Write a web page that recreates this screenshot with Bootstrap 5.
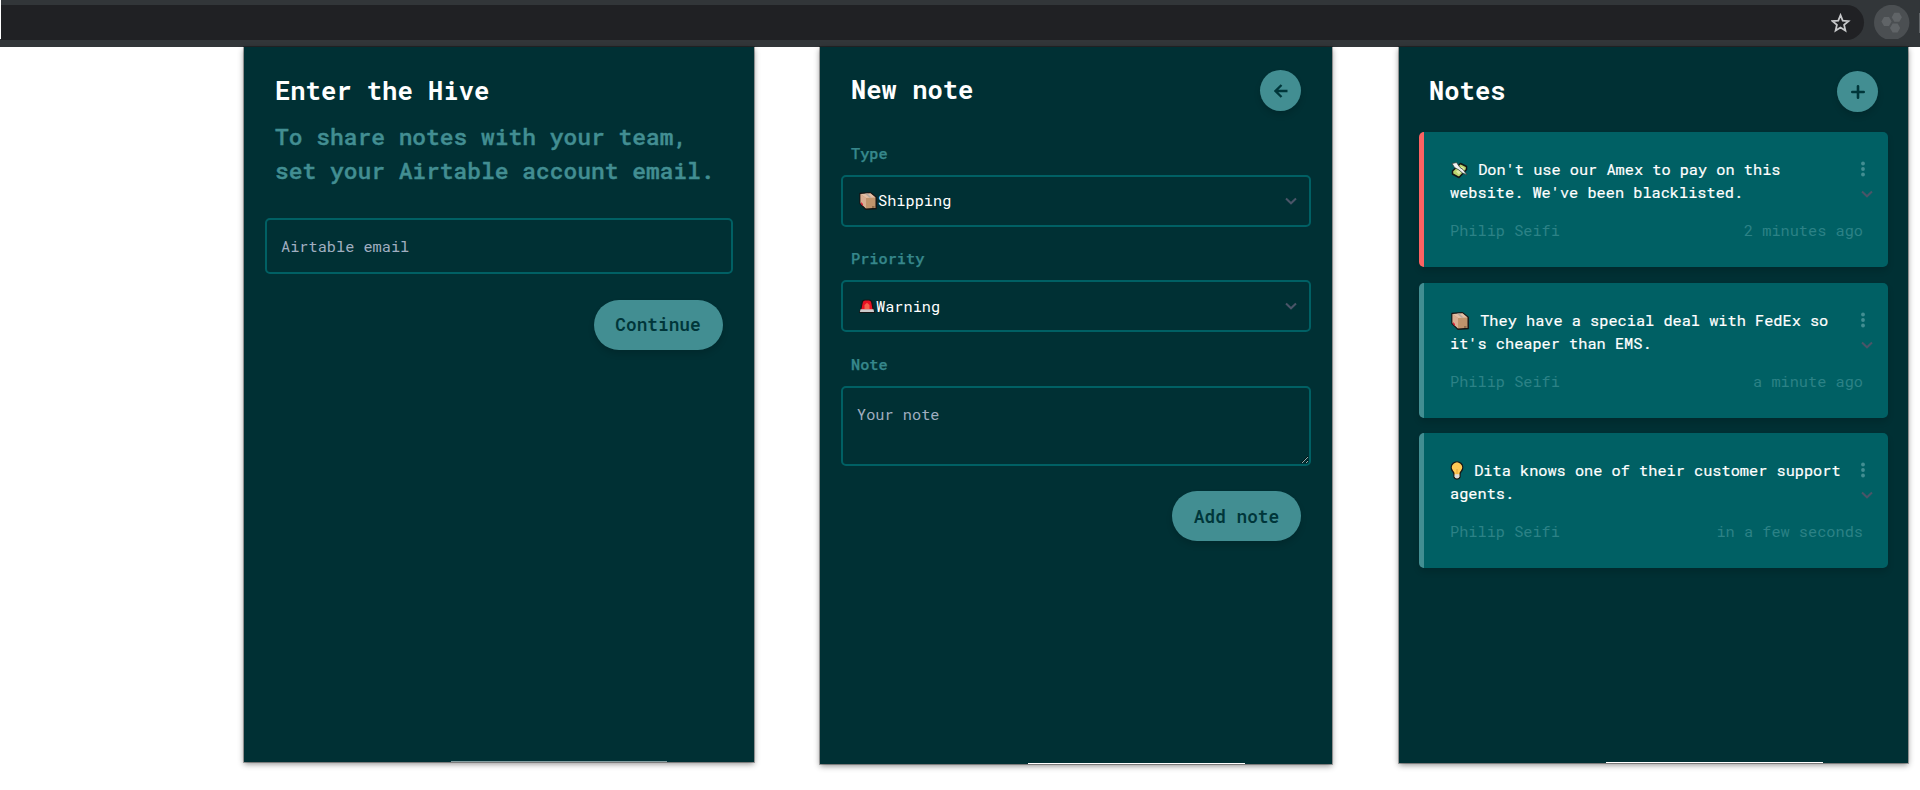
<!DOCTYPE html>
<html lang="en">
<head>
<meta charset="utf-8">
<meta name="viewport" content="width=device-width, initial-scale=1">
<title>Hive notes</title>
<link rel="stylesheet" href="https://cdn.jsdelivr.net/npm/bootstrap@5.3.0/dist/css/bootstrap.min.css">
<style>
  body { font-family: "Roboto Mono", "DejaVu Sans Mono", "Liberation Mono", monospace; font-size: 15.27px; line-height: 23px; background: #fff; height: 790px; overflow: hidden; }
  svg { display: block; flex: none; }
  .browser-bar { height: 47px; background: #323639; padding: 5px 0 7px; }
  .address { width: 1863px; height: 35px; background: #202124; border-radius: 0 17.5px 17.5px 0; padding-right: 13px; }
  .bar-edge { width: 1px; height: 39px; background: #fff; margin-top: -5px; }
  .panels { padding-left: 244px; }
  .hive-panel { background: #003034; box-shadow: 0 0 0 1px rgba(0,0,0,.3), 0 2px 6px rgba(0,0,0,.45); padding: 0 21px; color: #fff; }
  .panel-enter { width: 509.5px; height: 715px; margin-right: 66.5px; }
  .panel-new { width: 511.5px; height: 717px; margin-right: 67px; padding-right: 20.5px; }
  .panel-list { width: 509.5px; height: 716px; padding: 0 20px 0 20.5px; }
  .edge-strip { width: 217px; height: 1px; background: #fff; margin-left: 187px; }
  .panel-enter .edge-strip { width: 216px; background: #829c9e; margin-left: 186px; }
  .panel-title { font-size: 25.5px; line-height: 38px; font-weight: 700; margin: 0; }
  .panel-enter .panel-title { margin: 24px 0 0 10px; }
  .panel-enter .intro { margin: 10px 0 0 10px; }
  .panel-enter .field { height: 56px; margin-top: 31px; padding: 0 14px; }
  .panel-enter .pill { margin-top: 26px; }
  .intro { font-size: 22.9px; line-height: 34px; color: #428e92; font-weight: 500; -webkit-text-stroke: .4px #428e92; white-space: nowrap; }
  .field { border: 2px solid #006064; border-radius: 5px; background: transparent; color: #fff; font-size: 15.27px; line-height: 23px; }
  .field::placeholder { color: #a0aec0; opacity: 1; }
  .choice { height: 52px; margin-top: 10px; padding: 0 12px 0 16px; }
  .choice span { margin-left: 1px; }
  .field-label { color: #36878b; line-height: 23px; padding-left: 10px; font-weight: 500; -webkit-text-stroke: .25px #36878b; margin-top: 20.6px; }
  .head-new { padding: 23px 10px 10px 10px; }
  .head-list { padding: 24px 10px 20.4px 10px; }
  .pill { width: 129px; height: 49.5px; border-radius: 25px; background: #428e92; color: #00363a; font-size: 17.8px; font-weight: 600; border: 0; padding: 0; margin: 25.5px 10px 0 0; box-shadow: 0 4px 6px rgba(0,0,0,.14); }
  .round-btn { width: 41px; height: 41px; border-radius: 50%; background: #428e92; color: #00363a; border: 0; padding: 0; box-shadow: 0 4px 6px rgba(0,0,0,.14); }
  .note-card { height: 135px; margin-bottom: 15.3px; background: #006064; border-left: 5px solid #428e92; border-radius: 5px; padding: 26px 15px 0 26px; box-shadow: 0 4px 6px rgba(0,0,0,.14); }
  .note-card.urgent { border-left-color: #fc6262; }
  .note-text { height: 46px; white-space: nowrap; -webkit-text-stroke: .2px #fff; }
  .note-meta { color: #2c8286; margin-top: 15px; padding-right: 10px; }
  .note-text svg { display: inline-block; vertical-align: -4px; }
  .note-dots { margin: 3px 8px 13px 0; }
</style>
</head>
<body>
<svg width="0" height="0" class="d-none">
  <symbol id="box" viewBox="0 0 18 18"><path d="M1 1.500 11.500 .8 17.200 5.200V16.500L7 17.300 1 11.500Z" fill="#c0946c" stroke="#151515" stroke-width="1.400" stroke-linejoin="round"/><path d="M1.500 2 11.500 1.300 16.500 5.500 7 6Z" fill="#e3bfa4"/><path d="M1.500 2 7 6V16.600L1.500 11.200Z" fill="#d9ae92"/><path d="m6 1.700 4.500 4 2-.1-4-4Z" fill="#b5aaa0"/><path d="m2 10 2 2v2l-2-2Z" fill="#e0243c"/><path d="M13 14.500h2.500v1H13Z" fill="#64482f"/></symbol>
  <symbol id="siren" viewBox="0 0 16 14"><path d="M1.800 10.500 3.300 3Q3.800 1 6 1h4q2.200 0 2.700 2l1.500 7.500 1.100 2.800H.7Z" fill="#e81123" stroke="#161616" stroke-width="1.200"/><path d="M5.500 10V6L8 3.800 10.500 6v4Z" fill="#f7604a"/><path d="M1.500 10.300h13l.6 2.700H.9Z" fill="#ccc"/></symbol>
  <symbol id="money" viewBox="0 0 17 18"><path d="M1.500 10 9.500 2.500 15.500 5.500V8.500L8 16.500 1.500 13Z" fill="#bad36c" stroke="#161616" stroke-width="1.500" stroke-linejoin="round"/><path d="m5 10.500 6-5 2.500 2-5.500 6Z" fill="#dce8a4"/><path d="M1 2.500 5.500 1.500 9 6.500 12 8.500 16 14 11.500 12 8 9 3.500 6.500Z" fill="#f2f2f2" stroke="#33413c" stroke-width=".8"/></symbol>
  <symbol id="bulb" viewBox="0 0 14 19"><path d="M4 13.500Q4 11.500 2.500 10A5.700 5.700 0 1 1 11.500 10Q10 11.500 10 13.500V16Q9.500 18 7 18T4 16Z" fill="#ffc955" stroke="#161616" stroke-width="1.300"/><path d="M4.600 13.300h4.800v2.500L8 17.300H6l-1.400-1.500Z" fill="#ddd"/><path d="M7 8v5" stroke="#e4a83b"/></symbol>
  <symbol id="chev" viewBox="0 0 12 8"><path d="m1 1.500 5 4.800 5-4.800" fill="none" stroke="#4a5568" stroke-width="2"/></symbol>
  <symbol id="dots" viewBox="0 0 4 16"><g fill="#428e92"><circle cx="2" cy="2.500" r="1.900"/><circle cx="2" cy="8" r="1.900"/><circle cx="2" cy="13.500" r="1.900"/></g></symbol>
</svg>

<header class="browser-bar d-flex align-items-start">
  <div class="bar-edge"></div>
  <div class="address d-flex align-items-center justify-content-end">
    <svg width="20" height="20" viewBox="0 0 20 20"><path d="m9.500 2.200 2.200 5.400 5.800.5-4.400 3.800 1.300 5.700-4.900-3-4.900 3 1.300-5.700L1.500 8.100l5.800-.5Z" fill="none" stroke="#c7c8ca" stroke-width="1.800"/></svg>
  </div>
  <svg class="ms-auto" width="46" height="34" viewBox="0 0 46 34"><circle cx="17.700" cy="17.500" r="17.700" fill="#4b4f52"/><g fill="#606467"><path d="M10 12h5l2.600 4.500L15 21h-5l-2.600-4.500Z"/><path d="M20.300 7.800h5l2.600 4.500-2.600 4.500h-5l-2.600-4.500Z"/><path d="M18.600 18.500h5l2.600 4.500-2.600 4.500h-5L16 23Z"/></g><path d="M45 8h1v20h-1Z" fill="#606467"/></svg>
</header>

<main class="panels d-flex align-items-start">
  <section class="hive-panel panel-enter d-flex flex-column">
    <h1 class="panel-title">Enter the Hive</h1>
    <p class="intro">To share notes with your team,<br>set your Airtable account email.</p>
    <input class="field w-100" placeholder="Airtable email">
    <button class="pill btn align-self-end">Continue</button>
    <div class="edge-strip mt-auto"></div>
  </section>

  <section class="hive-panel panel-new d-flex flex-column">
    <div class="head-new d-flex justify-content-between">
      <h1 class="panel-title">New note</h1>
      <button class="round-btn d-flex align-items-center justify-content-center"><svg width="14" height="14" viewBox="0 0 14 14"><path d="M13.500 7H1.500M7.500 1l-6 6 6 6" fill="none" stroke="#00363a" stroke-width="2.300"/></svg></button>
    </div>
    <div class="field-label">Type</div>
    <div class="field choice d-flex align-items-center"><svg width="18" height="18"><use href="#box"/></svg><span>Shipping</span><svg class="ms-auto" width="12" height="8"><use href="#chev"/></svg></div>
    <div class="field-label">Priority</div>
    <div class="field choice d-flex align-items-center"><svg width="16" height="14"><use href="#siren"/></svg><span>Warning</span><svg class="ms-auto" width="12" height="8"><use href="#chev"/></svg></div>
    <div class="field-label">Note</div>
    <textarea class="field w-100" style="height:80px;margin-top:10px;padding:15px 14px" placeholder="Your note"></textarea>
    <button class="pill btn align-self-end">Add note</button>
    <div class="edge-strip mt-auto"></div>
  </section>

  <section class="hive-panel panel-list d-flex flex-column">
    <div class="head-list d-flex justify-content-between">
      <h1 class="panel-title">Notes</h1>
      <button class="round-btn d-flex align-items-center justify-content-center"><svg width="14" height="14" viewBox="0 0 14 14"><path d="M7 1.300v11.400M1.300 7h11.400" stroke="#00363a" stroke-width="2.600" stroke-linecap="round"/></svg></button>
    </div>
    <article class="note-card urgent">
      <div class="d-flex justify-content-between">
        <div class="note-text"><svg width="19" height="18" viewBox="0 0 19 18"><use href="#money" x="1" width="17" height="18"/></svg> Don't use our Amex to pay on this<br>website. We've been blacklisted.</div>
        <div class="d-flex flex-column align-items-center"><svg class="note-dots" width="4" height="16"><use href="#dots"/></svg><svg width="12" height="8"><use href="#chev"/></svg></div>
      </div>
      <div class="note-meta d-flex justify-content-between"><span>Philip Seifi</span><span>2 minutes ago</span></div>
    </article>
    <article class="note-card">
      <div class="d-flex justify-content-between">
        <div class="note-text"><svg width="21" height="18" viewBox="0 0 21 18"><use href="#box" x="1" width="18" height="18"/></svg> They have a special deal with FedEx so<br>it's cheaper than EMS.</div>
        <div class="d-flex flex-column align-items-center"><svg class="note-dots" width="4" height="16"><use href="#dots"/></svg><svg width="12" height="8"><use href="#chev"/></svg></div>
      </div>
      <div class="note-meta d-flex justify-content-between"><span>Philip Seifi</span><span>a minute ago</span></div>
    </article>
    <article class="note-card">
      <div class="d-flex justify-content-between">
        <div class="note-text"><svg width="15" height="19" viewBox="0 0 15 19"><use href="#bulb" width="14" height="19"/></svg> Dita knows one of their customer support<br>agents.</div>
        <div class="d-flex flex-column align-items-center"><svg class="note-dots" width="4" height="16"><use href="#dots"/></svg><svg width="12" height="8"><use href="#chev"/></svg></div>
      </div>
      <div class="note-meta d-flex justify-content-between"><span>Philip Seifi</span><span>in a few seconds</span></div>
    </article>
    <div class="edge-strip mt-auto"></div>
  </section>
</main>
<script src="https://cdn.jsdelivr.net/npm/bootstrap@5.3.0/dist/js/bootstrap.bundle.min.js"></script>
</body>
</html>
